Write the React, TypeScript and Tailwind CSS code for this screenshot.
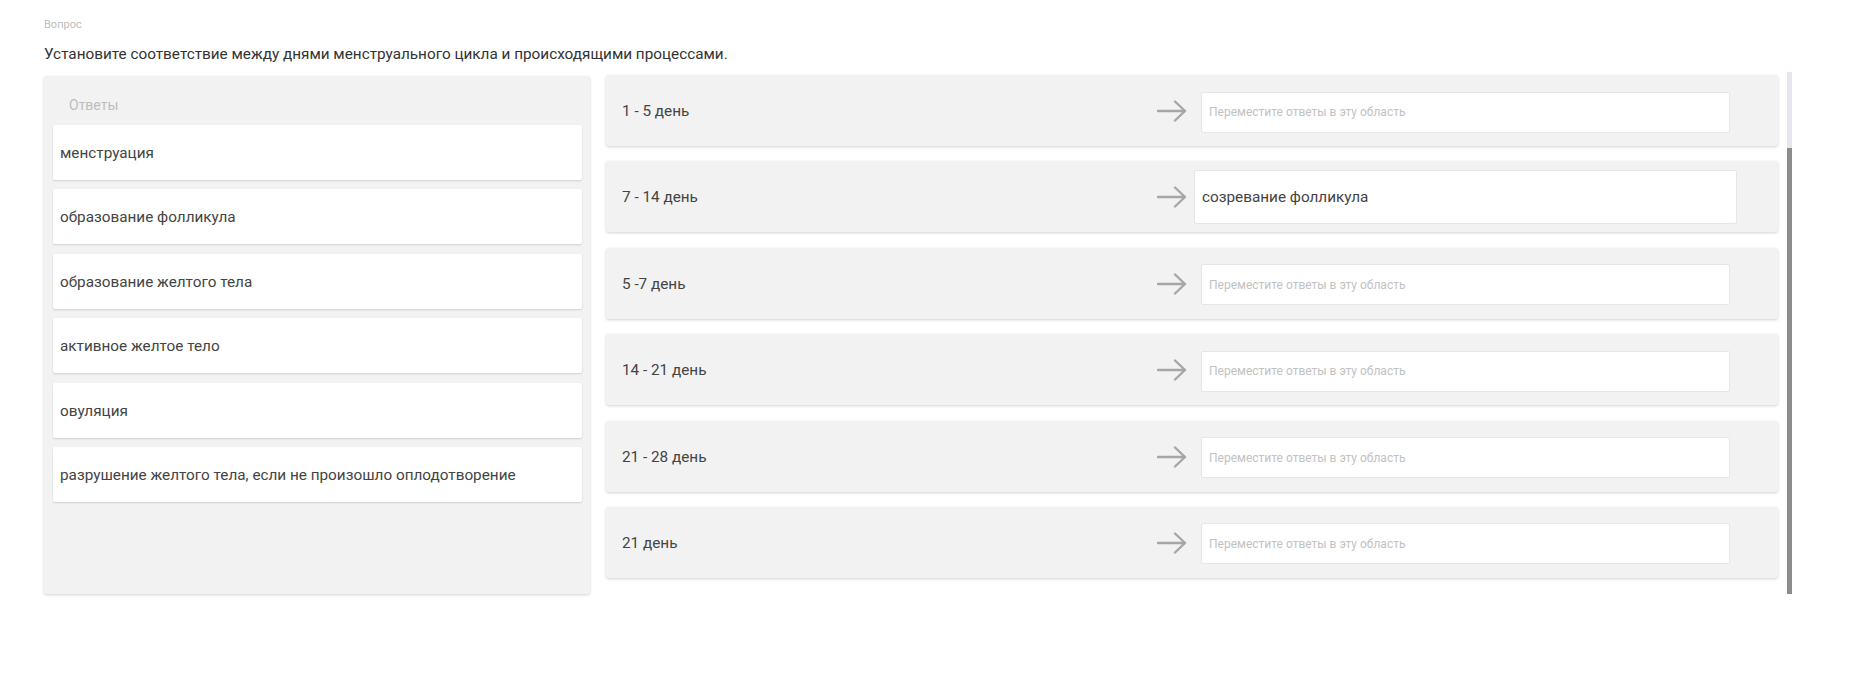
import React from "react";

const answers = [
  "менструация",
  "образование фолликула",
  "образование желтого тела",
  "активное желтое тело",
  "овуляция",
  "разрушение желтого тела, если не произошло оплодотворение",
];

const rows: { label: string; value?: string }[] = [
  { label: "1 - 5 день" },
  { label: "7 - 14 день", value: "созревание фолликула" },
  { label: "5 -7 день" },
  { label: "14 - 21 день" },
  { label: "21 - 28 день" },
  { label: "21 день" },
];

function Arrow() {
  return (
    <svg width="30" height="22" viewBox="0 0 30 22" fill="none" className="shrink-0 mt-[1px]">
      <path d="M1 11H28M18 1.5L28 11L18 20.5" stroke="#a6a6a6" strokeWidth="2.4" strokeLinecap="round" strokeLinejoin="round" />
    </svg>
  );
}

export default function App() {
  return (
    <div
      className="w-full h-[674px] bg-white pl-[44px] pt-[17px]"
      style={{ fontFamily: "Roboto, 'Noto Sans', sans-serif" }}
    >
      <div className="text-[11px] leading-[16px] text-[#bdbdbd]">Вопрос</div>
      <div className="mt-[10px] text-[15.3px] leading-[22px] text-[#333333]">
        Установите соответствие между днями менструального цикла и происходящими процессами.
      </div>
      <div className="mt-[10px] flex items-start">
        <div className="w-[546px] h-[518px] mt-[1px] bg-[#f2f2f2] rounded-[3px] shadow-[0_1px_3px_rgba(0,0,0,0.18)] pl-[9px] pr-[8px] pt-[18px]">
          <div className="pl-[16px] text-[14px] leading-[22px] text-[#bdbdbd]">Ответы</div>
          <div className="mt-[9px] flex flex-col gap-[9.4px]">
            {answers.map((a) => (
              <div
                key={a}
                className="h-[55px] bg-white rounded-[2px] shadow-[0_1px_2px_rgba(0,0,0,0.14)] flex items-center pl-[7px] pt-[2px] text-[15.3px] text-[#444444]"
              >
                {a}
              </div>
            ))}
          </div>
        </div>
        <div className="ml-[16px] w-[1172px] flex flex-col gap-[15.4px]">
          {rows.map((r) => (
            <div
              key={r.label}
              className="h-[71px] bg-[#f2f2f2] rounded-[3px] shadow-[0_1px_3px_rgba(0,0,0,0.18)] flex items-center pl-[16px]"
            >
              <div className="flex-1 pt-[2px] text-[15.3px] text-[#444444]">{r.label}</div>
              <Arrow />
              <div className="ml-[14px] mr-[48px] w-[529px] flex">
                {r.value ? (
                  <div className="mx-[-7px] flex-1 h-[54px] mt-[1px] bg-white border border-[#e6e6e6] rounded-[2px] flex items-center pl-[7px] text-[15.3px] text-[#444444]">
                    {r.value}
                  </div>
                ) : (
                  <div className="flex-1 h-[41px] mt-[3px] bg-white border border-[#e6e6e6] rounded-[2px] flex items-center pl-[7px] text-[12px] text-[#c2c2c2]">
                    Переместите ответы в эту область
                  </div>
                )}
              </div>
            </div>
          ))}
        </div>
        <div className="ml-[9px] mt-[-3px] w-[5px] h-[522px] flex flex-col">
          <div className="h-[76px] bg-[#e6e6ee]" />
          <div className="flex-1 bg-[#8c8c8c]" />
        </div>
      </div>
    </div>
  );
}
